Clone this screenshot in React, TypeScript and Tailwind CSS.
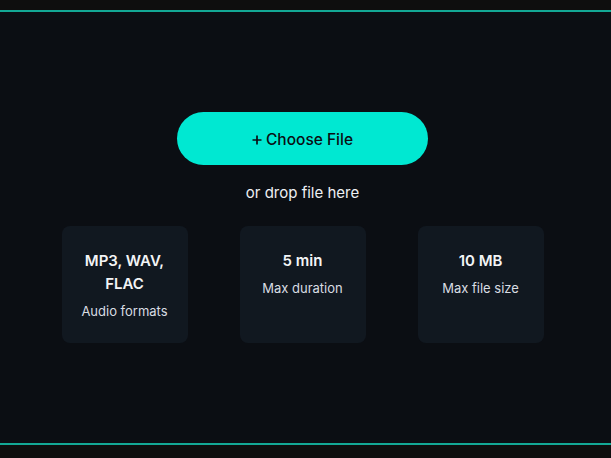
import React from 'react';

interface SpecCardProps {
  title: string;
  label: string;
}

const SpecCard: React.FC<SpecCardProps> = ({ title, label }) => (
  <div className="rounded-lg bg-[#111820] px-4 pt-[23px] pb-[22px] text-center">
    <div className="text-[15px] font-semibold leading-[23px] text-[#f3f4f6]">{title}</div>
    <div className="mt-[6px] text-[13px] leading-[20px] text-[#d9dde3]">{label}</div>
  </div>
);

export default function App() {
  const specs = [
    { title: 'MP3, WAV, FLAC', label: 'Audio formats' },
    { title: '5 min', label: 'Max duration' },
    { title: '10 MB', label: 'Max file size' },
  ];

  return (
    <div
      className="h-screen w-full bg-[#0e0e0e] pt-[10px]"
      style={{ fontFamily: 'Inter, "Noto Sans", sans-serif' }}
    >
      {/* Drop zone */}
      <div className="h-[435px] border-y-2 border-[#13a895] bg-[#0b0e13]">
        <div className="flex w-[605px] flex-col items-center pt-[100px]">
          <button className="flex h-[53px] w-[251px] items-center justify-center gap-[4px] rounded-full bg-[#00e8d2] pt-[3px] text-[15.5px] font-medium leading-[22px] text-[#0b0e13]">
            <svg width="10" height="10" viewBox="0 0 10 10" className="mb-[1px]">
              <path d="M5 0.5v9M0.5 5h9" stroke="#0b0e13" strokeWidth="1.7" />
            </svg>
            <span>Choose File</span>
          </button>
          <p className="mt-[17px] text-[15px] leading-[22px] text-[#eef0f3]">or drop file here</p>

          <div className="mt-[22px] grid w-[482px] grid-cols-3 gap-[52px]">
            {specs.map((s) => (
              <SpecCard key={s.label} title={s.title} label={s.label} />
            ))}
          </div>
        </div>
      </div>
    </div>
  );
}
